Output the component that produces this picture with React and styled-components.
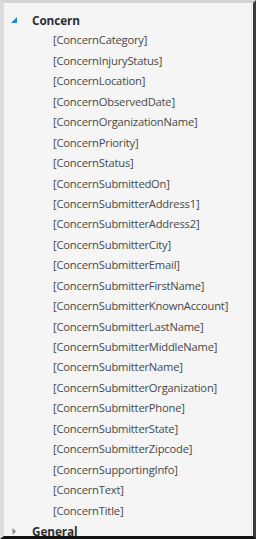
import React from "react";
import styled, { createGlobalStyle } from "styled-components";

const Global = createGlobalStyle`
  html, body { margin: 0; padding: 0; background: #f5f5f5; }
  #root { width: 256px; height: 539px; }
`;

const Frame = styled.div`
  box-sizing: border-box;
  width: 256px;
  height: 539px;
  overflow: hidden;
  background: #f5f5f5;
  border-top: 3px solid #d4d4d4;
  border-left: 4px solid #dcdcdc;
  border-right: 3px solid #3a3a3a;
  border-bottom: 3px solid #111;
`;

const Inner = styled.div`
  box-sizing: border-box;
  height: 100%;
  border-right: 1px solid #e4e4e4;
  margin-right: 1px;
  padding-top: 7px;
  font-family: "Open Sans", "Noto Sans", sans-serif;
  font-size: 11.2px;
  letter-spacing: -0.2px;
`;

const GroupRow = styled.div`
  display: flex;
  align-items: center;
  height: 20.45px;
  padding-left: 6px;
`;

const Toggle = styled.span`
  width: 22px;
  display: flex;
  align-items: center;
  justify-content: flex-start;
`;

const GroupLabel = styled.span`
  font-weight: 700;
  font-size: 11.8px;
  letter-spacing: -0.1px;
  color: #2f2f2f;
`;

const Item = styled.div`
  height: 20.45px;
  line-height: 20.45px;
  padding-left: 49px;
  color: #484848;
  white-space: nowrap;
`;

const items = [
  "ConcernCategory",
  "ConcernInjuryStatus",
  "ConcernLocation",
  "ConcernObservedDate",
  "ConcernOrganizationName",
  "ConcernPriority",
  "ConcernStatus",
  "ConcernSubmittedOn",
  "ConcernSubmitterAddress1",
  "ConcernSubmitterAddress2",
  "ConcernSubmitterCity",
  "ConcernSubmitterEmail",
  "ConcernSubmitterFirstName",
  "ConcernSubmitterKnownAccount",
  "ConcernSubmitterLastName",
  "ConcernSubmitterMiddleName",
  "ConcernSubmitterName",
  "ConcernSubmitterOrganization",
  "ConcernSubmitterPhone",
  "ConcernSubmitterState",
  "ConcernSubmitterZipcode",
  "ConcernSupportingInfo",
  "ConcernText",
  "ConcernTitle",
];

const Expanded = () => (
  <svg width="8" height="8" viewBox="0 0 8 8">
    <path d="M7 1 L7 7 L1 7 Z" fill="#1b8ad8" />
  </svg>
);

const Collapsed = () => (
  <svg width="8" height="9" viewBox="0 0 8 9">
    <path d="M2.5 1 L6 4.5 L2.5 8 Z" fill="#8a8a8a" />
  </svg>
);

export default function App() {
  return (
    <>
      <Global />
      <Frame>
        <Inner>
          <GroupRow>
            <Toggle><Expanded /></Toggle>
            <GroupLabel>Concern</GroupLabel>
          </GroupRow>
          {items.map((t) => (
            <Item key={t}>[{t}]</Item>
          ))}
          <GroupRow>
            <Toggle><Collapsed /></Toggle>
            <GroupLabel>General</GroupLabel>
          </GroupRow>
        </Inner>
      </Frame>
    </>
  );
}
